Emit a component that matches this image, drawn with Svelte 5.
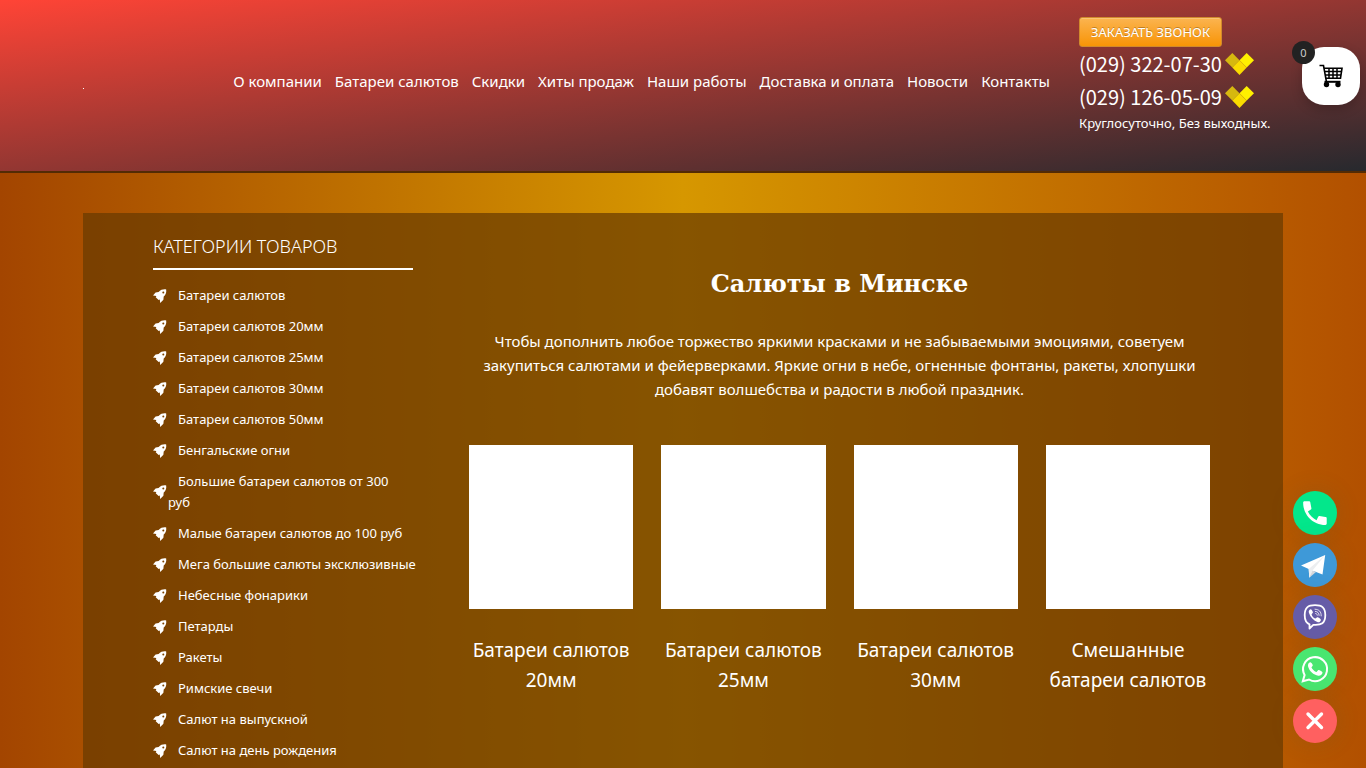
<script>
  const menu = [
    "О компании",
    "Батареи салютов",
    "Скидки",
    "Хиты продаж",
    "Наши работы",
    "Доставка и оплата",
    "Новости",
    "Контакты"
  ];

  const phones = ["(029) 322-07-30", "(029) 126-05-09"];

  const categories = [
    "Батареи салютов",
    "Батареи салютов 20мм",
    "Батареи салютов 25мм",
    "Батареи салютов 30мм",
    "Батареи салютов 50мм",
    "Бенгальские огни",
    "Большие батареи салютов от 300\nруб",
    "Малые батареи салютов до 100 руб",
    "Мега большие салюты эксклюзивные",
    "Небесные фонарики",
    "Петарды",
    "Ракеты",
    "Римские свечи",
    "Салют на выпускной",
    "Салют на день рождения"
  ];

  const cards = [
    "Батареи салютов 20мм",
    "Батареи салютов 25мм",
    "Батареи салютов 30мм",
    "Смешанные батареи салютов"
  ];

  let cartCount = $state(0);
  let chatOpen = $state(true);
</script>

<header>
  <div class="container bar">
    <a class="logo" href="/" aria-label="Главная"><span></span></a>
    <nav>
      {#each menu as item}
        <a href="#menu">{item}</a>
      {/each}
    </nav>
    <div class="contacts">
      <button class="callback" type="button">ЗАКАЗАТЬ ЗВОНОК</button>
      {#each phones as phone}
        <a class="phone" href="tel:{phone}">
          {phone}
          <svg width="29" height="23" viewBox="0 0 29 23" aria-hidden="true">
            <path d="M7.3 1 14.5 8.2 7.3 15.5 0 8.2z" fill="#d6b80f" />
            <path d="M21.7 1 29 8.2 21.7 15.5 14.5 8.2z" fill="#fff000" />
            <path d="M14.5 8.2 21.7 15.5 14.5 23 7.3 15.5z" fill="#fadc00" />
          </svg>
        </a>
      {/each}
      <p>Круглосуточно, Без выходных.</p>
    </div>
  </div>
</header>

<div class="container panel">
  <aside>
    <h2>Категории товаров</h2>
    <ul>
      {#each categories as category}
        <li>
          <svg width="14" height="14" viewBox="0 0 14 14" aria-hidden="true">
            <path
              fill="#fff"
              fill-rule="evenodd"
              d="M13.2.4C10.4 0 7.8.6 5.6 3L2.6 3.4 0 6.6l3.4.3-.7 1.3 2.9 2.9 1.2-.6.4 3.4 3.2-3.2.3-3.2C12.7 5.8 13.6 3.4 13.2.4zM10.3 2.4a1 1 0 1 1 0 2 1 1 0 0 1 0-2z"
            />
          </svg>
          <a href="#category">{category}</a>
        </li>
      {/each}
    </ul>
  </aside>

  <main>
    <h1>Салюты в Минске</h1>
    <p>
      Чтобы дополнить любое торжество яркими красками и не забываемыми эмоциями,
      советуем закупиться салютами и фейерверками. Яркие огни в небе, огненные
      фонтаны, ракеты, хлопушки добавят волшебства и радости в любой праздник.
    </p>
    <div class="cards">
      {#each cards as card}
        <a class="card" href="#card">
          <span class="photo"></span>
          <span class="name">{card}</span>
        </a>
      {/each}
    </div>
  </main>
</div>

<button class="cart" type="button" aria-label="Корзина">
  <svg width="24" height="24" viewBox="0 0 24 24" fill="none" stroke="#000">
    <path d="M.5 1.5h4L7.5 18" stroke-width="1.6" />
    <path d="M5 4.2H23L21.5 14.2H7" stroke-width="1.6" />
    <path d="M5.6 7.6H22.5M6.3 11H22M10 4v10M14 4v10M18 4v10" stroke-width="1.5" />
    <path d="M5.5 17.8H21.5" stroke-width="2" />
    <circle cx="7.5" cy="20.5" r="2.7" fill="#000" stroke="none" />
    <circle cx="19" cy="20.5" r="2.7" fill="#000" stroke="none" />
  </svg>
  <span class="count">{cartCount}</span>
</button>

<div class="chat">
  {#if chatOpen}
    <a href="tel:0293220730" aria-label="Телефон">
      <svg viewBox="0 0 44 44">
        <circle cx="22" cy="22" r="22" fill="#03e78b" />
        <path
          transform="translate(6.2 6.4) scale(1.31)"
          fill="#fff"
          d="M6.62 10.79c1.44 2.83 3.76 5.14 6.59 6.59l1.3-2.7c.2-.4.6-.5 1-.4l4.5.7c.6 0 1 .4 1 1V20c0 .55-.45 1-1 1-9.39 0-17-7.61-17-17 0-.55.45-1 1-1h3.5c.55 0 1 .45 1 1l.8 4.2c.1.4 0 .8-.4 1z"
        />
      </svg>
    </a>
    <a href="#telegram" aria-label="Telegram">
      <svg viewBox="0 0 44 44">
        <circle cx="22" cy="22" r="22" fill="#3e99d8" />
        <path d="M32.2 12 29.5 31.5 20.5 28 16.3 34.8 15.7 26 8 22.5z" fill="#fff" />
        <path d="M32.2 12 15.7 26 16.3 34.8 19.5 27.5z" fill="#eceef0" />
        <path d="M19.5 27.5 23 29 16.3 34.8z" fill="#d5d8dc" />
      </svg>
    </a>
    <a href="#viber" aria-label="Viber">
      <svg viewBox="0 0 44 44" fill="none" stroke="#fff" stroke-linecap="round">
        <circle cx="22" cy="22" r="22" fill="#665ca7" stroke="none" />
        <path
          d="M22 10.2c-7 0-10.3 2.3-10.3 9.9 0 5 1.2 7.9 4.8 9.2v4.2l3.8-3.7c8.2.6 12-1.4 12-9.7 0-7.6-3.3-9.9-10.3-9.9z"
          stroke-width="1.8"
          stroke-linejoin="round"
        />
        <path
          d="M17.6 14.3c-1.5.7-2.2 1.9-1.7 3.4 1.5 4.6 4.6 7.9 9 9.5 1.3.4 2.5-.7 3-2 .3-1-2.8-3.2-3.7-2.9-.8.3-1.1 1.4-2 1.2-1.6-.5-3.2-2.4-3.6-4-.1-.8 1.3-1.2 1.3-2.1 0-.8-1.5-3.2-2.3-3.1z"
          fill="#fff"
          stroke="none"
        />
        <path
          d="M22 14.2c4.2.2 6.3 2.5 6.2 6.7M22.4 16.4c2.4.2 3.7 1.6 3.7 4M22.7 18.5c1 .1 1.5.7 1.6 1.7"
          stroke-width="0.8"
        />
      </svg>
    </a>
    <a href="#whatsapp" aria-label="WhatsApp">
      <svg viewBox="0 0 44 44">
        <circle cx="22" cy="22" r="22" fill="#49e670" />
        <path
          d="M9.8 34.2 11.6 28A12 12 0 1 1 16 32.5z"
          fill="none"
          stroke="#fff"
          stroke-width="2"
        />
        <path
          d="M17.3 15.2c-1.8.4-2.7 2.3-2.2 4.4 1 4.3 5.5 8.6 10.2 9.1 2.2.2 4.2-1.2 4.2-3.4 0-.8-3.4-2.5-4.1-2.3-.8.2-1.3 2-2.2 1.9-1.9-.6-4-2.7-4.7-4.4-.1-.8 1.4-1.5 1.3-2.3-.1-.7-1.5-3.2-2.5-3z"
          fill="#fff"
        />
      </svg>
    </a>
  {/if}
  <button type="button" aria-label="Скрыть" onclick={() => (chatOpen = !chatOpen)}>
    <svg viewBox="0 0 44 44">
      <circle cx="22" cy="22" r="22" fill="#ff6060" />
      <path d="M15 15 28.5 28.5M28.5 15 15 28.5" stroke="#fff" stroke-width="3.4" stroke-linecap="round" />
    </svg>
  </button>
</div>

<style>
  :global(body) {
    background: linear-gradient(90deg, #a34500, #d69700 50%, #b25000);
    color: #fff;
    font-family: "Noto Sans", "Open Sans", sans-serif;
    font-size: 15px;
    line-height: 24px;
  }
  a {
    color: inherit;
    text-decoration: none;
  }
  h1,
  h2,
  p,
  ul {
    margin: 0;
    padding: 0;
  }
  button {
    font-family: inherit;
    cursor: pointer;
  }
  .container {
    max-width: 1200px;
    margin: 0 auto;
    box-sizing: border-box;
  }
  header {
    padding: 17px 0 25px;
    background: linear-gradient(to bottom right, #ff4436, #27292e) padding-box;
    border-bottom: 2px solid #532b04;
  }
  .bar {
    display: flex;
    align-items: center;
  }
  .logo {
    padding-top: 14px;
  }
  .logo span {
    display: block;
    width: 1px;
    height: 1px;
    background: #fff;
  }
  nav {
    display: flex;
    gap: 13px;
    margin-left: auto;
    padding-bottom: 2px;
    white-space: nowrap;
  }
  .contacts {
    display: flex;
    flex-direction: column;
    align-items: flex-start;
    width: 204px;
    margin-left: 29px;
    padding-bottom: 12px;
    white-space: nowrap;
  }
  .callback {
    height: 30px;
    padding: 0 11px;
    border: 1px solid #d08a2c;
    border-radius: 3px;
    background: linear-gradient(#fbb450, #f89406);
    color: #fff;
    font-size: 13px;
    text-shadow: 0 -1px 0 rgba(0, 0, 0, 0.25);
    box-shadow: inset 0 1px 0 rgba(255, 255, 255, 0.2);
  }
  .phone {
    display: flex;
    align-items: center;
    gap: 3px;
    font-family: "Noto Sans CJK SC", "Noto Sans", sans-serif;
    font-size: 20px;
    line-height: 33px;
  }
  .contacts p {
    font-size: 13px;
    line-height: 21px;
  }
  .panel {
    display: flex;
    gap: 56px;
    margin-top: 40px;
    padding: 20px 73px 20px 70px;
    background: rgba(104, 58, 0, 0.72);
  }
  aside {
    flex: 0 0 260px;
    min-width: 0;
  }
  h2 {
    padding: 0 0 9px;
    border-bottom: 2px solid #fff;
    font-size: 18px;
    font-weight: 300;
    line-height: 26px;
    text-transform: uppercase;
  }
  ul {
    margin-top: 15px;
    list-style: none;
  }
  li {
    display: flex;
    align-items: center;
    gap: 1px;
    margin-bottom: 10px;
    font-size: 13px;
    line-height: 21px;
    text-indent: 10px;
    white-space: pre;
  }
  li svg {
    flex: none;
  }
  main {
    flex: 1;
    padding-top: 33px;
    text-align: center;
  }
  h1 {
    font-family: "DejaVu Serif", serif;
    font-size: 24px;
    line-height: 36px;
  }
  main p {
    margin: 27px 8px 44px;
  }
  .cards {
    display: grid;
    grid-template-columns: repeat(4, 1fr);
    gap: 28px;
  }
  .card {
    display: flex;
    flex-direction: column;
    gap: 26px;
  }
  .photo {
    aspect-ratio: 1;
    background: #fff;
  }
  .name {
    font-size: 19px;
    line-height: 30px;
  }
  .cart {
    position: fixed;
    top: 47px;
    right: 6px;
    display: flex;
    align-items: center;
    justify-content: center;
    width: 58px;
    height: 58px;
    padding: 0;
    border: 0;
    border-radius: 22px;
    background: #fff;
    box-shadow: 0 4px 12px rgba(0, 0, 0, 0.2);
  }
  .count {
    position: absolute;
    top: -6px;
    left: -10px;
    width: 23px;
    border-radius: 50%;
    background: #222;
    color: #ccc;
    font-size: 11px;
    line-height: 23px;
  }
  .chat {
    position: fixed;
    right: 29px;
    bottom: 25px;
    display: flex;
    flex-direction: column;
    gap: 8px;
  }
  .chat a,
  .chat button {
    width: 44px;
    height: 44px;
    padding: 0;
    border: 0;
    border-radius: 50%;
    background: none;
    box-shadow: 0 0 24px rgba(80, 90, 60, 0.2);
  }
  .chat svg {
    display: block;
  }
</style>
